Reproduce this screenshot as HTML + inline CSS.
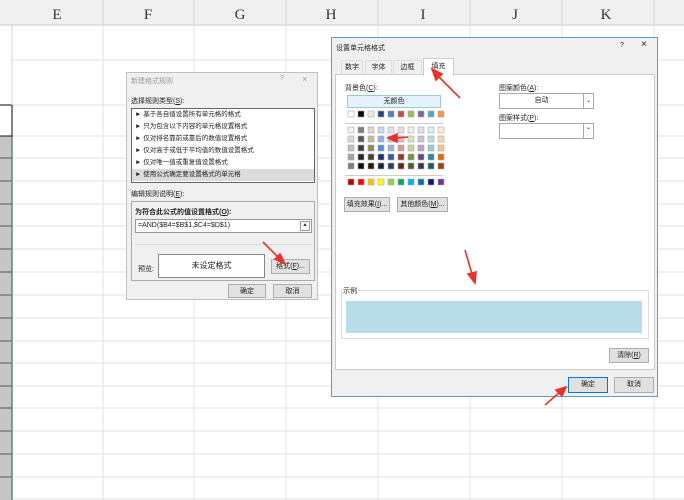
<!DOCTYPE html>
<html><head><meta charset="utf-8"><style>
*{margin:0;padding:0;box-sizing:border-box}
body{width:684px;height:500px;overflow:hidden;background:#fff;position:relative;font-family:"Liberation Sans","Noto Sans CJK SC",sans-serif;font-size:7px;color:#222}
.a{position:absolute}
.btn{position:absolute;background:#e1e1e1;border:1px solid #adadad;text-align:center;font-size:7px;line-height:13px}
</style></head><body>
<svg class="a" style="left:0;top:0" width="684" height="500">
<rect x="0" y="0" width="684" height="25" fill="#f0f0f0"/>
<line x1="0" y1="25" x2="684" y2="25" stroke="#c8c8c8"/>
<g stroke="#d4d4d4">
<line x1="103" y1="0" x2="103" y2="25"/><line x1="194" y1="0" x2="194" y2="25"/><line x1="286" y1="0" x2="286" y2="25"/><line x1="378" y1="0" x2="378" y2="25"/><line x1="470" y1="0" x2="470" y2="25"/><line x1="562" y1="0" x2="562" y2="25"/><line x1="654" y1="0" x2="654" y2="25"/>
</g>
<g stroke="#e2e2e2">
<line x1="103" y1="25" x2="103" y2="500"/><line x1="194" y1="25" x2="194" y2="500"/><line x1="286" y1="25" x2="286" y2="500"/><line x1="378" y1="25" x2="378" y2="500"/><line x1="470" y1="25" x2="470" y2="500"/><line x1="562" y1="25" x2="562" y2="500"/><line x1="654" y1="25" x2="654" y2="500"/>
<line x1="12" y1="60" x2="684" y2="60"/><line x1="12" y1="105" x2="684" y2="105"/>
<line x1="12" y1="136" x2="684" y2="136"/><line x1="12" y1="158" x2="684" y2="158"/><line x1="12" y1="181" x2="684" y2="181"/><line x1="12" y1="204" x2="684" y2="204"/><line x1="12" y1="226" x2="684" y2="226"/><line x1="12" y1="249" x2="684" y2="249"/><line x1="12" y1="272" x2="684" y2="272"/><line x1="12" y1="295" x2="684" y2="295"/><line x1="12" y1="318" x2="684" y2="318"/><line x1="12" y1="341" x2="684" y2="341"/><line x1="12" y1="363" x2="684" y2="363"/><line x1="12" y1="386" x2="684" y2="386"/><line x1="12" y1="408" x2="684" y2="408"/><line x1="12" y1="431" x2="684" y2="431"/><line x1="12" y1="454" x2="684" y2="454"/><line x1="12" y1="477" x2="684" y2="477"/><line x1="12" y1="499" x2="684" y2="499"/>
</g>
<rect x="0" y="136" width="12" height="364" fill="#c6c6c6"/>
<g stroke="#555"><line x1="0" y1="158" x2="12" y2="158"/><line x1="0" y1="181" x2="12" y2="181"/><line x1="0" y1="204" x2="12" y2="204"/><line x1="0" y1="226" x2="12" y2="226"/><line x1="0" y1="249" x2="12" y2="249"/><line x1="0" y1="272" x2="12" y2="272"/><line x1="0" y1="295" x2="12" y2="295"/><line x1="0" y1="318" x2="12" y2="318"/><line x1="0" y1="341" x2="12" y2="341"/><line x1="0" y1="363" x2="12" y2="363"/><line x1="0" y1="386" x2="12" y2="386"/><line x1="0" y1="408" x2="12" y2="408"/><line x1="0" y1="431" x2="12" y2="431"/><line x1="0" y1="454" x2="12" y2="454"/><line x1="0" y1="477" x2="12" y2="477"/></g>
<line x1="12" y1="136" x2="12" y2="500" stroke="#5a8a6a" stroke-width="1.5"/>
<rect x="-1" y="105" width="13" height="31" fill="none" stroke="#333" stroke-width="1.2"/>
<line x1="12" y1="25" x2="12" y2="105" stroke="#d4d4d4"/>
<g font-family="Liberation Serif,serif" font-size="15" fill="#333" text-anchor="middle">
<text x="57" y="19">E</text><text x="148" y="19">F</text><text x="240" y="19">G</text><text x="331" y="19">H</text><text x="423" y="19">I</text><text x="515" y="19">J</text><text x="606" y="19">K</text></g>
</svg>

<!-- dialog 1 -->
<div class="a" style="left:126px;top:72px;width:192px;height:228px;background:#f0f0f0;border:1px solid #bfbfbf">
 <div class="a" style="left:4px;top:3px;color:#999;font-size:7px">新建格式规则</div>
 <div class="a" style="left:153px;top:2px;color:#999">?</div>
 <div class="a" style="left:175px;top:1px;color:#999;font-size:9px">×</div>
 <div class="a" style="left:4px;top:23px">选择规则类型(<u>S</u>):</div>
 <div class="a" style="left:4px;top:35px;width:184px;height:75px;background:#fff;border:1px solid #666;line-height:12px;font-size:6.5px">
  <div style="padding-left:3px">► 基于各自值设置所有单元格的格式</div>
  <div style="padding-left:3px">► 只为包含以下内容的单元格设置格式</div>
  <div style="padding-left:3px">► 仅对排名靠前或靠后的数值设置格式</div>
  <div style="padding-left:3px">► 仅对高于或低于平均值的数值设置格式</div>
  <div style="padding-left:3px">► 仅对唯一值或重复值设置格式</div>
  <div style="padding-left:3px;background:#dcdcdc">► 使用公式确定要设置格式的单元格</div>
 </div>
 <div class="a" style="left:4px;top:116px">编辑规则说明(<u>E</u>):</div>
 <div class="a" style="left:4px;top:128px;width:184px;height:80px;border:1px solid #aaa;background:#f0f0f0">
  <div class="a" style="left:3px;top:5px;font-weight:bold">为符合此公式的值设置格式(<u>O</u>):</div>
  <div class="a" style="left:3px;top:17px;width:177px;height:14px;background:#fff;border:1px solid #999;line-height:12px;padding-left:2px">=AND($B4=$B$1,$C4=$D$1)<span class="a" style="right:1px;top:1px;width:10px;height:10px;border:1px solid #999;font-size:6px;line-height:9px;text-align:center">⯅</span></div>
  <div class="a" style="left:3px;top:42px;width:177px;border-top:1px solid #ddd"></div>
  <div class="a" style="left:6px;top:62px">预览:</div>
  <div class="a" style="left:26px;top:52px;width:107px;height:24px;background:#fff;border:1px solid #888;text-align:center;line-height:22px;font-size:8px">未设定格式</div>
  <div class="btn" style="left:139px;top:57px;width:39px;height:15px">格式(<u>F</u>)...</div>
 </div>
 <div class="btn" style="left:101px;top:211px;width:38px;height:14px">确定</div>
 <div class="btn" style="left:146px;top:211px;width:39px;height:14px">取消</div>
</div>

<!-- dialog 2 -->
<div class="a" style="left:331px;top:37px;width:327px;height:360px;background:#f0f0f0;border:1px solid #5b9bd5">
 <div class="a" style="left:4px;top:5px;font-size:7px">设置单元格格式</div>
 <div class="a" style="left:288px;top:4px">?</div>
 <div class="a" style="left:309px;top:1px;font-size:10px">×</div>
 <div class="a" style="left:3px;top:36px;width:320px;height:296px;background:#fff;border:1px solid #ccc"></div>
 <div class="a" style="left:9px;top:22px;width:22px;height:15px;border:1px solid #ddd;border-bottom:none;text-align:center;line-height:14px">数字</div>
 <div class="a" style="left:33px;top:22px;width:27px;height:15px;border:1px solid #ddd;border-bottom:none;text-align:center;line-height:14px">字体</div>
 <div class="a" style="left:61px;top:22px;width:29px;height:15px;border:1px solid #ddd;border-bottom:none;text-align:center;line-height:14px">边框</div>
 <div class="a" style="left:91px;top:20px;width:31px;height:18px;background:#fff;border:1px solid #ccc;border-bottom:none;text-align:center;line-height:16px">填充</div>
 <div class="a" style="left:13px;top:45px">背景色(<u>C</u>):</div>
 <div class="a" style="left:15px;top:57px;width:94px;height:13px;background:#e5f1fb;border:1px solid #9cc;text-align:center;line-height:11px">无颜色</div>
 <div class="a" style="left:13px;top:85px;width:98px;border-top:1px solid #ccc"></div>
 <div class="a" style="left:13px;top:137px;width:98px;border-top:1px solid #ccc"></div>
 <div class="btn" style="left:12px;top:159px;width:46px;height:15px">填充效果(<u>I</u>)...</div>
 <div class="btn" style="left:65px;top:159px;width:51px;height:15px">其他颜色(<u>M</u>)...</div>
 <div class="a" style="left:167px;top:45px">图案颜色(<u>A</u>):</div>
 <div class="a" style="left:167px;top:55px;width:95px;height:16px;background:#fff;border:1px solid #aaa;line-height:14px;text-align:center;padding-right:10px">自动<span class="a" style="right:0;top:0;width:10px;height:14px;border-left:1px solid #aaa;font-size:6px">⌄</span></div>
 <div class="a" style="left:167px;top:75px">图案样式(<u>P</u>):</div>
 <div class="a" style="left:167px;top:85px;width:95px;height:16px;background:#fff;border:1px solid #aaa"><span class="a" style="right:0;top:0;width:10px;height:14px;border-left:1px solid #aaa;font-size:6px;text-align:center">⌄</span></div>
 <div class="a" style="left:9px;top:252px;width:308px;height:49px;border:1px solid #ddd"></div>
 <div class="a" style="left:11px;top:248px;background:#fff;padding-right:1px">示例</div>
 <div class="a" style="left:14px;top:263px;width:296px;height:32px;background:#b6dde8"></div>
 <div class="btn" style="left:277px;top:310px;width:40px;height:15px">清除(<u>R</u>)</div>
 <div class="btn" style="left:236px;top:339px;width:40px;height:16px;border:1px solid #0078d7;line-height:14px">确定</div>
 <div class="btn" style="left:282px;top:339px;width:40px;height:16px;line-height:14px">取消</div>
</div>
<svg class="a" style="left:0;top:0" width="684" height="500">
<g stroke="#aaa" stroke-width="0.6">
<rect x="348" y="111" width="6" height="6" fill="#fff"/><rect x="358" y="111" width="6" height="6" fill="#000"/><rect x="368" y="111" width="6" height="6" fill="#eeece1"/><rect x="378" y="111" width="6" height="6" fill="#1f497d"/><rect x="388" y="111" width="6" height="6" fill="#4f81bd"/><rect x="398" y="111" width="6" height="6" fill="#c0504d"/><rect x="408" y="111" width="6" height="6" fill="#9bbb59"/><rect x="418" y="111" width="6" height="6" fill="#8064a2"/><rect x="428" y="111" width="6" height="6" fill="#4bacc6"/><rect x="438" y="111" width="6" height="6" fill="#f79646"/>
<rect x="348" y="127" width="6" height="6" fill="#f2f2f2"/><rect x="358" y="127" width="6" height="6" fill="#7f7f7f"/><rect x="368" y="127" width="6" height="6" fill="#ddd9c3"/><rect x="378" y="127" width="6" height="6" fill="#c6d9f0"/><rect x="388" y="127" width="6" height="6" fill="#dbe5f1"/><rect x="398" y="127" width="6" height="6" fill="#f2dcdb"/><rect x="408" y="127" width="6" height="6" fill="#ebf1dd"/><rect x="418" y="127" width="6" height="6" fill="#e5e0ec"/><rect x="428" y="127" width="6" height="6" fill="#dbeef3"/><rect x="438" y="127" width="6" height="6" fill="#fdeada"/>
<rect x="348" y="136" width="6" height="6" fill="#d8d8d8"/><rect x="358" y="136" width="6" height="6" fill="#595959"/><rect x="368" y="136" width="6" height="6" fill="#c4bd97"/><rect x="378" y="136" width="6" height="6" fill="#8db3e2"/><rect x="388" y="136" width="6" height="6" fill="#b8cce4"/><rect x="398" y="136" width="6" height="6" fill="#e5b9b7"/><rect x="408" y="136" width="6" height="6" fill="#d7e3bc"/><rect x="418" y="136" width="6" height="6" fill="#ccc1d9"/><rect x="428" y="136" width="6" height="6" fill="#b7dde8"/><rect x="438" y="136" width="6" height="6" fill="#fbd5b5"/>
<rect x="348" y="145" width="6" height="6" fill="#bfbfbf"/><rect x="358" y="145" width="6" height="6" fill="#3f3f3f"/><rect x="368" y="145" width="6" height="6" fill="#938953"/><rect x="378" y="145" width="6" height="6" fill="#548dd4"/><rect x="388" y="145" width="6" height="6" fill="#95b3d7"/><rect x="398" y="145" width="6" height="6" fill="#d99694"/><rect x="408" y="145" width="6" height="6" fill="#c3d69b"/><rect x="418" y="145" width="6" height="6" fill="#b2a2c7"/><rect x="428" y="145" width="6" height="6" fill="#92cddc"/><rect x="438" y="145" width="6" height="6" fill="#fac08f"/>
<rect x="348" y="154" width="6" height="6" fill="#a5a5a5"/><rect x="358" y="154" width="6" height="6" fill="#262626"/><rect x="368" y="154" width="6" height="6" fill="#494429"/><rect x="378" y="154" width="6" height="6" fill="#17365d"/><rect x="388" y="154" width="6" height="6" fill="#366092"/><rect x="398" y="154" width="6" height="6" fill="#953734"/><rect x="408" y="154" width="6" height="6" fill="#76923c"/><rect x="418" y="154" width="6" height="6" fill="#5f497a"/><rect x="428" y="154" width="6" height="6" fill="#31859b"/><rect x="438" y="154" width="6" height="6" fill="#e36c09"/>
<rect x="348" y="163" width="6" height="6" fill="#7f7f7f"/><rect x="358" y="163" width="6" height="6" fill="#0c0c0c"/><rect x="368" y="163" width="6" height="6" fill="#1d1b10"/><rect x="378" y="163" width="6" height="6" fill="#0f243e"/><rect x="388" y="163" width="6" height="6" fill="#244061"/><rect x="398" y="163" width="6" height="6" fill="#632423"/><rect x="408" y="163" width="6" height="6" fill="#4f6128"/><rect x="418" y="163" width="6" height="6" fill="#3f3151"/><rect x="428" y="163" width="6" height="6" fill="#205867"/><rect x="438" y="163" width="6" height="6" fill="#974806"/>
<rect x="348" y="179" width="6" height="6" fill="#c00000"/><rect x="358" y="179" width="6" height="6" fill="#ff0000"/><rect x="368" y="179" width="6" height="6" fill="#ffc000"/><rect x="378" y="179" width="6" height="6" fill="#ffff00"/><rect x="388" y="179" width="6" height="6" fill="#92d050"/><rect x="398" y="179" width="6" height="6" fill="#00b050"/><rect x="408" y="179" width="6" height="6" fill="#00b0f0"/><rect x="418" y="179" width="6" height="6" fill="#0070c0"/><rect x="428" y="179" width="6" height="6" fill="#002060"/><rect x="438" y="179" width="6" height="6" fill="#7030a0"/>
</g>
<g fill="#e8322c" stroke="#e8322c" stroke-width="1.6">
<line x1="263" y1="242" x2="280" y2="259"/><polygon points="285,264 275,259 280,254" />
<line x1="460" y1="98" x2="438" y2="76"/><polygon points="432,69 442,74 436,80"/>
<line x1="465" y1="250" x2="472" y2="274"/><polygon points="475,283 468,274 476,272"/>
<line x1="545" y1="405" x2="560" y2="392"/><polygon points="566,387 562,396 556,390"/>
<line x1="408" y1="137" x2="396" y2="138"/><polygon points="388,138 397,134 397,142"/>
</g>
</svg>
</body></html>
